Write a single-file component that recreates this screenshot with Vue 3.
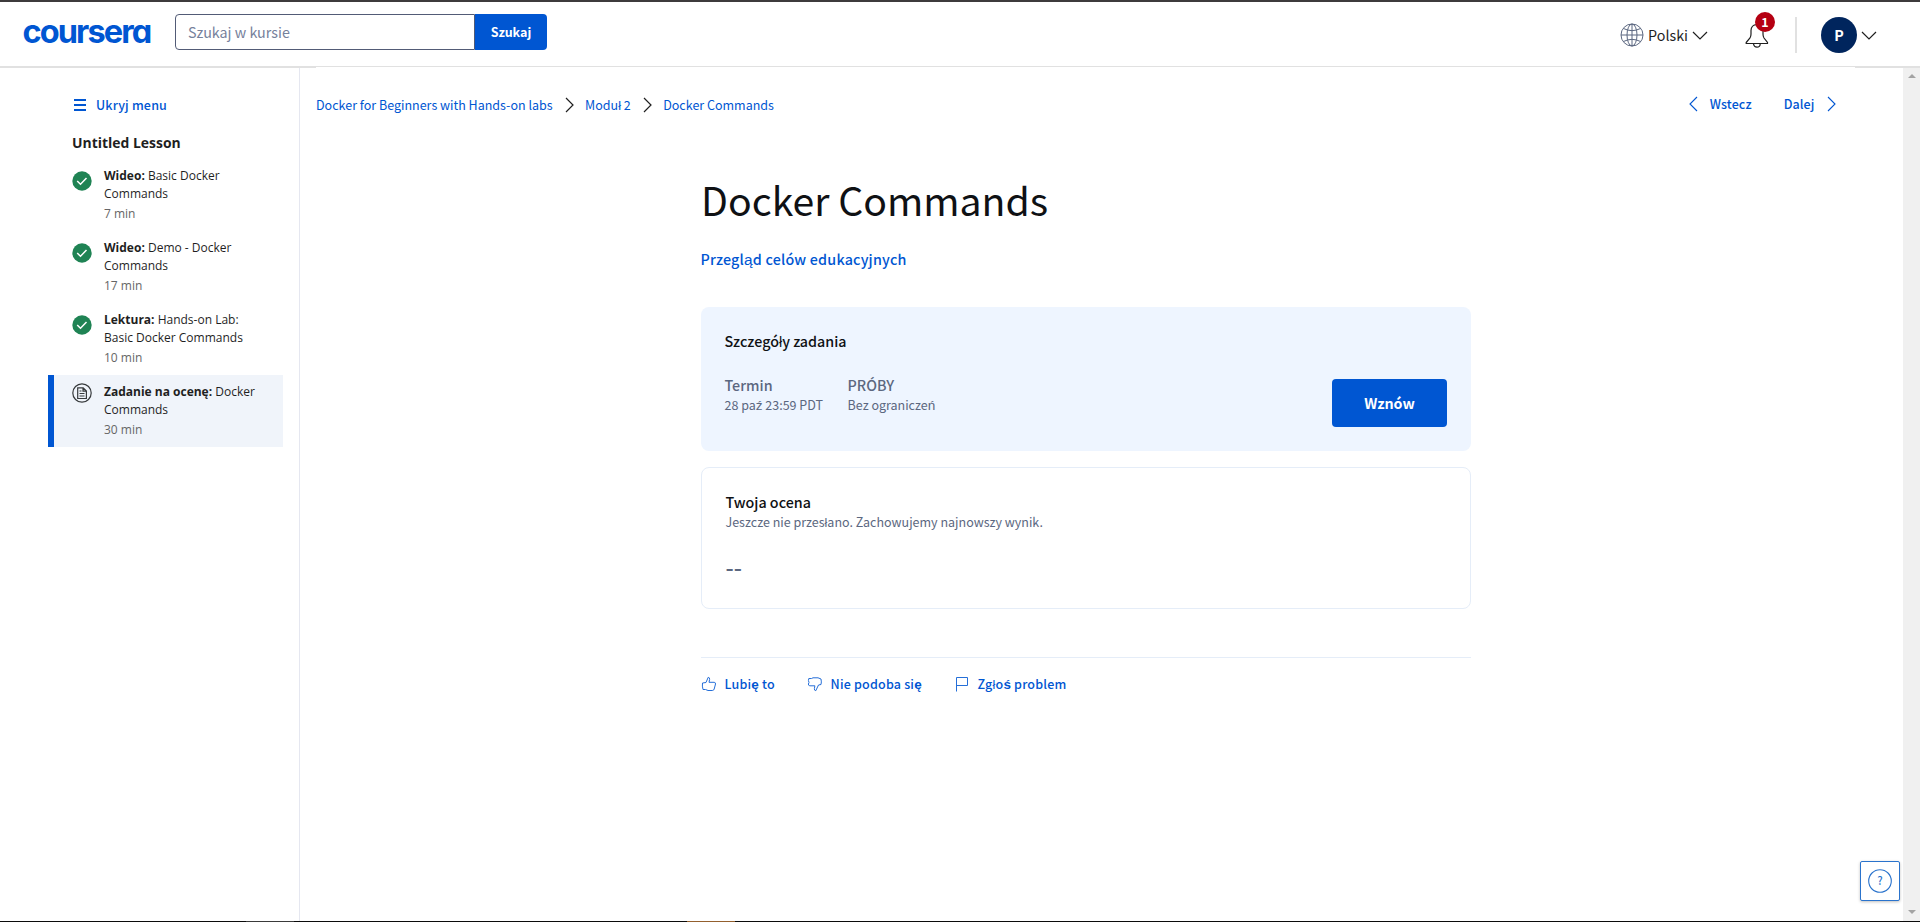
<script setup>
const lessons = [
  { kind: 'Wideo:', title: 'Basic Docker Commands', time: '7 min', done: true },
  { kind: 'Wideo:', title: 'Demo - Docker Commands', time: '17 min', done: true },
  { kind: 'Lektura:', title: 'Hands-on Lab: Basic Docker Commands', time: '10 min', done: true },
  { kind: 'Zadanie na ocenę:', title: 'Docker Commands', time: '30 min', done: false },
]
</script>

<template>
  <div class="page">
    <header class="topbar">
      <svg class="logo" width="130" height="34" viewBox="0 0 130 34">
        <text x="-1.500" y="26.200">coursera</text>
      </svg>
      <div class="search">
        <div class="field">Szukaj w kursie</div>
        <div class="go">Szukaj</div>
      </div>
      <div class="tools">
        <svg class="globe" width="24" height="24" viewBox="0 0 24 24">
          <circle cx="12" cy="12" r="11" />
          <ellipse cx="12" cy="12" rx="5" ry="11" />
          <path d="M12 1v22M1 12h22M3.500 5.500Q12 9.800 20.500 5.500M3.500 18.500Q12 14.200 20.500 18.500" />
        </svg>
        <span class="lang">Polski</span>
        <svg class="chev" width="16" height="9" viewBox="0 0 16 9"><path d="M1 1l7 7 7-7" /></svg>
        <div class="bellbox">
          <svg width="24" height="26" viewBox="0 0 24 26">
            <path d="M1.200 20.500L5 16Q6 14.500 6 12V8.500Q6 3 12 2.500Q18 3 18 8.500V12Q18 14.500 19 16L22.500 20.500V21.500H1.200ZM8.500 22Q9 25.200 12 25.200T15.200 22M12 .7V2.500" />
          </svg>
          <span class="badge">1</span>
        </div>
        <div class="sep"></div>
        <div class="avatar">P</div>
        <svg class="chev" width="16" height="9" viewBox="0 0 16 9"><path d="M1 1l7 7 7-7" /></svg>
      </div>
    </header>

    <div class="body">
      <aside class="side">
        <div class="hide">
          <svg width="12" height="12" viewBox="0 0 12 12"><path d="M0 1h12M0 6h12M0 11h12" /></svg>
          <span>Ukryj menu</span>
        </div>
        <h2>Untitled Lesson</h2>
        <div v-for="(l, i) in lessons" :key="i" class="item" :class="{ active: !l.done }">
          <svg v-if="l.done" class="mark" width="20" height="20" viewBox="0 0 20 20">
            <circle cx="10" cy="10" r="9.700" fill="#1f8354" />
            <path d="M5.200 10l3.300 3.200 6-6.200" fill="none" stroke="#fff" stroke-width="1.500" />
          </svg>
          <svg v-else class="mark" width="20" height="20" viewBox="0 0 20 20" fill="none" stroke="#373a3c">
            <circle cx="10" cy="10" r="9.200" stroke-width="1.200" />
            <path d="M5.700 4.800h5.500l3.200 3.200v7.500H5.700ZM11 4.800V8.200h3.400M7.500 8h2M7.500 10.500h5M7.500 13h5" stroke-width="1.200" />
          </svg>
          <div class="txt">
            <p><b>{{ l.kind }}</b> {{ l.title }}</p>
            <span>{{ l.time }}</span>
          </div>
        </div>
      </aside>

      <main class="main">
        <nav class="nav">
          <div class="crumbs">
            <span>Docker for Beginners with Hands-on labs</span>
            <svg width="9" height="16" viewBox="0 0 9 16"><path d="M1 1l7 7-7 7" /></svg>
            <span>Moduł 2</span>
            <svg width="9" height="16" viewBox="0 0 9 16"><path d="M1 1l7 7-7 7" /></svg>
            <span>Docker Commands</span>
          </div>
          <div class="pager">
            <svg width="9" height="16" viewBox="0 0 9 16"><path d="M8 1L1 8l7 7" /></svg>
            <span class="prev">Wstecz</span>
            <span class="next">Dalej</span>
            <svg width="9" height="16" viewBox="0 0 9 16"><path d="M1 1l7 7-7 7" /></svg>
          </div>
        </nav>

        <section class="content">
          <h1>Docker Commands</h1>
          <div class="goals">Przegl<i>ą</i>d celów edukacyjnych</div>

          <div class="card details">
            <div class="heading">Szczegóły zadania</div>
            <div class="row">
              <div class="col first"><b>Termin</b><span>28 pa<i>ź</i> 23:59 PDT</span></div>
              <div class="col"><b>PRÓBY</b><span>Bez ogranicze<i>ń</i></span></div>
              <div class="resume">Wznów</div>
            </div>
          </div>

          <div class="card grade">
            <div class="heading">Twoja ocena</div>
            <div class="note">Jeszcze nie przesłano. Zachowujemy najnowszy wynik.</div>
            <div class="score">--</div>
          </div>

          <div class="feedback">
            <div class="act like">
              <svg width="16" height="16" viewBox="0 0 16 16"><path d="M1.500 7L5 6.500 7.200 1.300Q9 1.500 8.600 3.500L8 6.300h5.200Q14.700 6.500 14.500 8L13.200 13Q12.800 14.500 11.300 14.500H7L4.500 13.500H2Q1 10 1.500 7Z" /></svg>
              <span>Lubi<i>ę</i> to</span>
            </div>
            <div class="act dislike">
              <svg width="16" height="16" viewBox="0 0 16 16"><path d="M1.800 2.500H4.500L6 1.800H11L14 3Q14.700 6 14 8.500L11.500 9 8.800 14.700Q7 14.500 7.400 12.500L7.900 9.800H2.800Q1.200 9.500 1.400 8L2 6.500Q1 4.500 1.800 2.500Z" /></svg>
              <span>Nie podoba si<i>ę</i></span>
            </div>
            <div class="act flag">
              <svg width="16" height="16" viewBox="0 0 16 16"><path d="M2.500 15.500V1.500H13.500V9.500H2.500" /></svg>
              <span>Zgło<i>ś</i> problem</span>
            </div>
          </div>
        </section>
      </main>

      <div class="scroll"><u class="up"></u><u class="down"></u></div>
    </div>

    <div class="taskedge"></div>
    <div class="shade left"></div>
    <div class="shade right"></div>
    <div class="help">
      <svg width="24" height="24" viewBox="0 0 24 24"><circle cx="12" cy="12" r="11.300" /><text x="12" y="16" text-anchor="middle">?</text></svg>
    </div>
  </div>
</template>

<style>
body { background: #fff; overflow: hidden; }
</style>

<style scoped>
* { box-sizing: border-box; }
.page { position: relative; width: 1920px; height: 922px; display: flex; flex-direction: column; font-family: "Noto Sans CJK SC", "Liberation Sans", sans-serif; font-size: 12.5px; line-height: 18px; color: #1f1f1f; white-space: nowrap; }
svg { display: block; flex: none; }
i { font-family: "Liberation Sans", sans-serif; font-style: normal; font-size: 1.08em; line-height: 1; }
.topbar { height: 67px; flex: none; border-top: 2px solid #3d3b3c; border-bottom: 1px solid #e1e1e1; display: flex; padding: 0 43px 0 24px; align-items: flex-start; }
.logo { margin-top: 15px; overflow: visible; }
.logo text { font: 700 32.500px Inter, sans-serif; font-feature-settings: "cv11"; letter-spacing: -1.900px; fill: #0056d2; }
.search { margin: 12px 0 0 21px; display: flex; width: 372px; height: 36px; }
.field { width: 300px; border: 1px solid #525b76; border-radius: 4px 0 0 4px; padding: 0 12px; font-size: 14.300px; line-height: 34px; color: #76819b; }
.go { flex: 1; background: #0056d2; color: #fff; font-weight: 700; text-align: center; line-height: 36px; border-radius: 0 4px 4px 0; }
.tools { margin-left: auto; display: flex; align-items: center; height: 66px; }
.globe { fill: none; stroke: #5b6780; stroke-width: 1; }
.lang { font-size: 14.300px; margin: 0 4px 0 4px; color: #1f1f1f; }
.chev { fill: none; stroke: #1f1f1f; stroke-width: 1.200; }
.bellbox { position: relative; margin-left: 37px; width: 24px; height: 26px; }
.bellbox svg { fill: none; stroke: #1f1f1f; stroke-width: 1.200; }
.badge { position: absolute; left: 10px; top: -10px; width: 20px; height: 20px; border-radius: 50%; background: #b50012; color: #fff; font-weight: 700; text-align: center; line-height: 20px; font-size: 12.500px; }
.sep { width: 2px; height: 36px; background: #e1e1e1; margin: 0 24px 0 26px; }
.avatar { width: 36px; height: 36px; border-radius: 50%; background: #00255d; color: #fff; font-weight: 700; font-size: 14.300px; line-height: 36px; text-align: center; margin-right: 4px; }

.body { flex: 1; display: flex; min-height: 0; }
.side { width: 300px; border-right: 1px solid #e5e7f0; padding: 29px 16px 0 48px; }
.hide { display: flex; align-items: center; gap: 10px; padding-left: 26px; color: #0056d2; font-weight: 500; height: 18px; letter-spacing: .18px; }
.hide svg { stroke: #0056d2; stroke-width: 2; }
.side h2 { margin: 19px 0 6px 24px; font: 700 13.950px/20px "Open Sans", sans-serif; color: #1f1f1f; }
.item { display: flex; height: 72px; padding: 8px 8px 0 24px; font: 12px/18px "Open Sans", sans-serif; }
.mark { margin: 4px 12px 0 0; }
.active { background: #f0f4fa; border-left: 6px solid #0056d2; padding-left: 18px; }
.active .mark { margin-top: 0; }
.txt { white-space: normal; }
.item p { margin: 0 0 2px; width: 160px; }
.item b { font-weight: 700; }
.item span { color: #666; }

.main { flex: 1; }
.nav { display: flex; justify-content: space-between; padding: 29px 67px 0 16px; height: 48px; color: #0056d2; }
.crumbs, .pager { display: flex; align-items: center; height: 18px; }
.crumbs svg { fill: none; stroke: #1f1f1f; stroke-width: 1.200; margin: 0 11.500px 0 12.500px; }
.crumbs svg + span { margin-left: -.5px; }
.pager { font-weight: 500; margin-top: -1px; }
.pager svg { fill: none; stroke: #0056d2; stroke-width: 1.100; }
.prev { margin: 0 32px 0 12px; letter-spacing: .1px; }
.next { margin-right: 12.500px; letter-spacing: .1px; }
.content { width: 770px; margin-left: 401px; padding-top: 58px; }
h1 { margin: 0; font-weight: 400; font-size: 39.200px; line-height: 52px; color: #0f1114; }
.goals { margin: 24px 0 0 -.5px; color: #0056d2; font-weight: 500; font-size: 14.300px; line-height: 20px; letter-spacing: .2px; }
.card { border-radius: 8px; height: 144px; }
.details { margin-top: 38px; background: #eef5ff; padding: 24px 24px 24px 23.500px; }
.heading { font-weight: 500; font-size: 14.300px; line-height: 20px; color: #0f1114; }
.row { display: flex; margin-top: 24px; }
.col { display: flex; flex-direction: column; color: #5b6780; }
.first { width: 123px; }
.col b { font-weight: 500; font-size: 14.300px; line-height: 20px; }
.col span { line-height: 20px; }
.resume { margin: 4px 0 0 auto; width: 115px; height: 48px; border-radius: 4px; background: #0056d2; color: #fff; font-weight: 700; font-size: 14.300px; line-height: 48px; text-align: center; }
.grade { margin-top: 16px; height: 142px; border: 1px solid #e5edf8; padding: 24px 23.500px; }
.note { margin-top: 1px; color: #5b6780; line-height: 18px; }
.score { margin-top: 25px; font-weight: 500; font-size: 23px; line-height: 20px; color: #5b6780; }
.feedback { margin-top: 48px; border-top: 1px solid #e5edf8; padding-top: 17px; display: flex; color: #0056d2; font-weight: 500; letter-spacing: .2px; }
.act { display: flex; height: 18px; align-items: center; gap: 7.500px; }
.act svg { fill: none; stroke: #0056d2; stroke-width: 1; opacity: .85; }
.like { width: 106px; }
.dislike { width: 147px; }
.feedback i { font-weight: 700; }
.scroll { width: 17px; margin-top: 1px; background: #f0f0f0; display: flex; flex-direction: column; justify-content: space-between; align-items: center; padding: 6px 0 7px; }
.scroll u { border: 4px solid transparent; }
.scroll .up { border-top: 0; border-bottom-color: #a3a3a3; }
.scroll .down { border-bottom: 0; border-top-color: #a3a3a3; }
.taskedge { height: 1px; flex: none; background: linear-gradient(90deg, #0b0b0b 246px, #3a3a3a 246px, #3a3a3a 294px, #0b0b0b 294px, #0b0b0b 687px, #94602e 687px, #94602e 735px, #0b0b0b 735px); }
.shade { position: absolute; top: 67px; height: 1px; background: #e1e1e1; }
.left { left: 0; width: 316px; }
.right { right: 0; width: 65px; }
.help { position: absolute; left: 1860px; top: 861px; width: 40px; height: 40px; border: 1px solid #2a73cc; border-radius: 2px; background: #fff; display: flex; align-items: center; justify-content: center; box-shadow: 0 1px 3px rgba(0, 0, 0, .25); }
.help svg { fill: none; stroke: #2a73cc; stroke-width: 1.100; }
.help text { fill: #2a73cc; stroke: none; font: 500 11px "Noto Sans CJK SC", sans-serif; }
</style>
